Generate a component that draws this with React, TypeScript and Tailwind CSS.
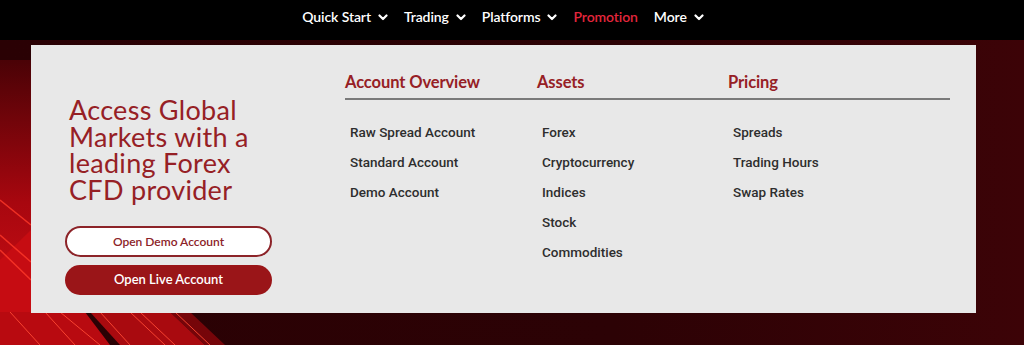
import React from "react";

const Chevron = () => (
  <svg width="10" height="7" viewBox="0 0 10 7" className="ml-[7px] mt-[1px]">
    <path d="M1.5 1.5 L5 5 L8.5 1.5" fill="none" stroke="white" strokeWidth="2.2" strokeLinecap="round" strokeLinejoin="round" />
  </svg>
);

const nav = [
  { label: "Quick Start", chevron: true },
  { label: "Trading", chevron: true },
  { label: "Platforms", chevron: true },
  { label: "Promotion", chevron: false, active: true },
  { label: "More", chevron: true },
];

const columns = [
  { title: "Account Overview", items: ["Raw Spread Account", "Standard Account", "Demo Account"] },
  { title: "Assets", items: ["Forex", "Cryptocurrency", "Indices", "Stock", "Commodities"] },
  { title: "Pricing", items: ["Spreads", "Trading Hours", "Swap Rates"] },
];

const Streaks = () => (
  <svg className="absolute left-0 top-0 w-full h-full" viewBox="0 0 1024 305" preserveAspectRatio="none">
    <defs>
      <linearGradient id="bgfade" x1="0" y1="0" x2="1" y2="0">
        <stop offset="0" stopColor="#2a0104" />
        <stop offset="0.6" stopColor="#2c0205" />
        <stop offset="1" stopColor="#3c0307" />
      </linearGradient>
      <linearGradient id="leftglow" x1="0" y1="0" x2="0" y2="1">
        <stop offset="0" stopColor="#4a0206" />
        <stop offset="0.5" stopColor="#a8070f" />
        <stop offset="1" stopColor="#d41016" />
      </linearGradient>
    </defs>
    <rect x="0" y="0" width="1024" height="305" fill="url(#bgfade)" />
    <polygon points="0,20 31,20 31,305 0,305" fill="url(#leftglow)" />
    <polygon points="0,220 31,190 31,305 0,305" fill="#c60c12" />
    <g stroke="#ff3a2a" strokeWidth="1.5" opacity="0.8">
      <line x1="0" y1="160" x2="31" y2="185" />
      <line x1="0" y1="195" x2="31" y2="222" />
      <line x1="0" y1="210" x2="31" y2="240" />
    </g>
    <polygon points="0,272 85,272 110,305 0,305" fill="#b80a10" />
    <polygon points="90,272 170,272 205,305 120,305" fill="#c00c12" opacity="0.85" />
    <polygon points="170,272 190,272 225,305 205,305" fill="#8a060b" opacity="0.8" />
    <g stroke="#ff4a35" strokeWidth="1" opacity="0.9">
      <line x1="10" y1="272" x2="40" y2="305" />
      <line x1="45" y1="272" x2="75" y2="305" />
      <line x1="60" y1="272" x2="100" y2="305" />
      <line x1="100" y1="272" x2="130" y2="305" />
      <line x1="130" y1="272" x2="165" y2="305" />
      <line x1="140" y1="272" x2="175" y2="305" />
      <line x1="175" y1="272" x2="210" y2="305" />
    </g>
  </svg>
);

export default function App() {
  return (
    <div className="relative w-[1024px] h-[345px] overflow-hidden bg-black" style={{ fontFamily: "Lato, 'Noto Sans', sans-serif" }}>
      <div className="absolute left-0 right-0 top-[40px] bottom-0">
        <Streaks />
      </div>
      <div className="relative">
        <header className="h-[40px] bg-black flex items-start justify-center pt-[8px] pr-[18px]">
          <nav className="flex items-center gap-[16px]">
            {nav.map((n) => (
              <div key={n.label} className="flex items-center">
                <span
                  className={`text-[14px] leading-[18px] font-semibold tracking-[-0.1px] ${n.active ? "text-[#e3263c]" : "text-white"}`}
                >
                  {n.label}
                </span>
                {n.chevron && <Chevron />}
              </div>
            ))}
          </nav>
        </header>
        <div className="mt-[5px] ml-[31px] w-[945px] h-[268px] bg-[#e8e8e8] flex">
          <div className="w-[314px] pl-[38px] pt-[52px]">
            <h2 className="text-[27px] leading-[26.5px] text-[#962025] font-normal tracking-[0.3px]">
              Access Global
              <br />
              Markets with a
              <br />
              leading Forex
              <br />
              CFD provider
            </h2>
            <div className="mt-[23px] ml-[-4px] flex flex-col gap-[8px] w-[207px]">
              <button className="h-[31px] rounded-full border-2 border-[#8c2328] bg-white text-[#8c2328] text-[12px] font-semibold">
                Open Demo Account
              </button>
              <button className="h-[30px] rounded-full bg-[#9a1518] text-white text-[13px] font-semibold">
                Open Live Account
              </button>
            </div>
          </div>
          <div className="pt-[27px] w-[605px]">
            <div className="grid grid-cols-[192px_191px_222px] border-b-2 border-[#7a7a7a] pb-[6px]">
              {columns.map((c) => (
                <div key={c.title} className="text-[16.5px] leading-[20px] font-bold text-[#962025] tracking-[-0.1px]">
                  {c.title}
                </div>
              ))}
            </div>
            <div className="grid grid-cols-[192px_191px_222px] pt-[24px]">
              {columns.map((c) => (
                <ul key={c.title} className="pl-[5px] flex flex-col gap-[13px]" style={{ fontFamily: "Roboto, sans-serif" }}>
                  {c.items.map((i) => (
                    <li key={i} className="text-[13.5px] leading-[17px] font-medium text-[#2e2e2e]">
                      {i}
                    </li>
                  ))}
                </ul>
              ))}
            </div>
          </div>
        </div>
      </div>
    </div>
  );
}
